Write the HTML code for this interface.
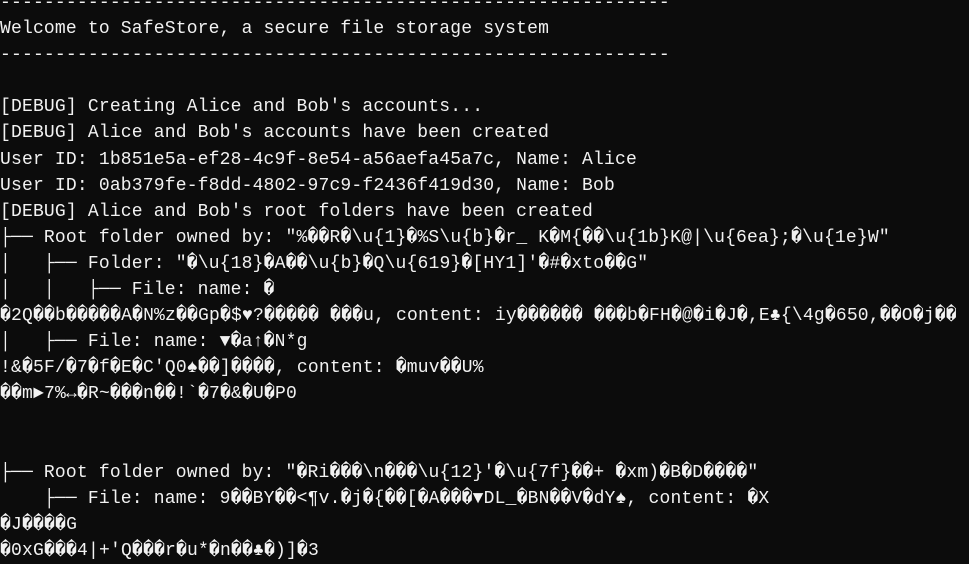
<!DOCTYPE html>
<html><head><meta charset="utf-8"><style>
html,body{margin:0;padding:0;background:#0c0c0c;width:969px;height:560px;overflow:hidden}
pre{margin:0;position:absolute;left:0;top:-10px;font-family:"Liberation Mono","DejaVu Sans Mono",monospace;font-size:18px;line-height:26.1px;color:#f2f2f2;white-space:pre;letter-spacing:0.18px}
</style></head><body><pre>-------------------------------------------------------------
Welcome to SafeStore, a secure file storage system
-------------------------------------------------------------

[DEBUG] Creating Alice and Bob's accounts...
[DEBUG] Alice and Bob's accounts have been created
User ID: 1b851e5a-ef28-4c9f-8e54-a56aefa45a7c, Name: Alice
User ID: 0ab379fe-f8dd-4802-97c9-f2436f419d30, Name: Bob
[DEBUG] Alice and Bob's root folders have been created
├── Root folder owned by: "%��R�\u{1}�%S\u{b}�r_ K�M{��\u{1b}K@|\u{6ea};�\u{1e}W"
│   ├── Folder: "�\u{18}�A��\u{b}�Q\u{619}�[HY1]'�#�xto��G"
│   │   ├── File: name: �
�2Q��b�����A�N%z��Gp�$♥?����� ���u, content: iy������ ���b�FH�@�i�J�,E♣{\4g�650,��O�j��
│   ├── File: name: ▼�a↑�N*g
!&�5F/�7�f�E�C'Q0♠��]����, content: �muv��U%
��m►7%↔�R~���n��!`�7�&�U�P0


├── Root folder owned by: "�Ri���\n���\u{12}'�\u{7f}��+ �xm)�B�D����"
    ├── File: name: 9��BY��&lt;¶v.�j�{��[�A���▼DL_�BN��V�dY♠, content: �X
�J����G
�0xG���4|+'Q���r�u*�n��♣�)]�3</pre></body></html>
